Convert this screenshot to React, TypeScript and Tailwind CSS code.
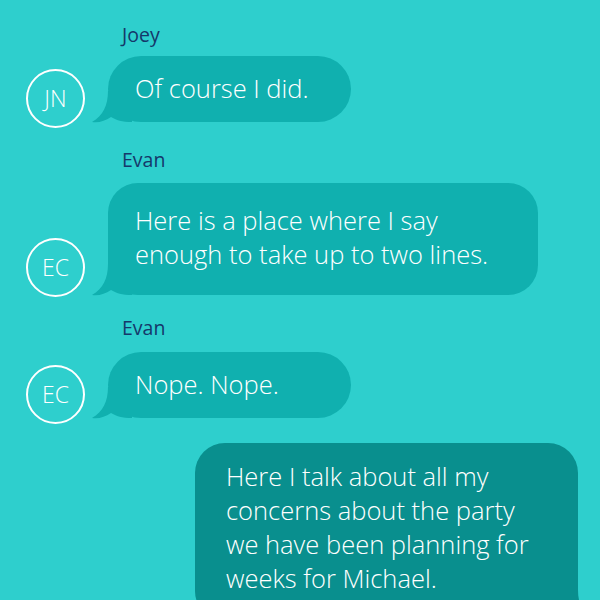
import React from "react";

const LeftTail = () => (
  <svg
    className="absolute left-[-16px] bottom-[-1px]"
    width="40"
    height="32"
    viewBox="0 0 40 32"
  >
    <path
      d="M16 0 C16 14 11 25 0 31 C7 32 13 30 19 26 C24 29 30 31 40 31 L40 0 Z"
      fill="#10b0af"
    />
  </svg>
);

const RightTail = () => (
  <svg
    className="absolute right-[-16px] bottom-[-1px]"
    width="40"
    height="32"
    viewBox="0 0 40 32"
  >
    <path
      d="M24 0 C24 14 29 25 40 31 C33 32 27 30 21 26 C16 29 10 31 0 31 L0 0 Z"
      fill="#098f8e"
    />
  </svg>
);

const Avatar = ({ initials }: { initials: string }) => (
  <div className="w-[59px] h-[59px] shrink-0 rounded-full border-2 border-white flex items-center justify-center text-white text-[23px] font-light leading-none">
    {initials}
  </div>
);

const Name = ({ children }: { children: React.ReactNode }) => (
  <div className="pl-[122px] text-[19.5px] leading-[24px] text-[#15386a]">
    {children}
  </div>
);

const bubbleText = "text-[25.5px] font-light leading-[34px] text-white";

export default function App() {
  return (
    <div
      className="w-[600px] h-[600px] overflow-hidden bg-[#2ecfcd] pt-[23px]"
      style={{ fontFamily: "'Open Sans', Lato, sans-serif" }}
    >
      <Name>Joey</Name>
      <div className="mt-[9px] flex items-end pl-[26px] gap-[23px]">
        <Avatar initials="JN" />
        <div className={`relative mb-[6px] w-[243px] rounded-[33px] bg-[#10b0af] px-[27px] pt-[15px] pb-[17px] ${bubbleText}`}>
          <LeftTail />
          <span className="relative">Of course I did.</span>
        </div>
      </div>

      <div className="mt-[20px]">
        <Name>Evan</Name>
      </div>
      <div className="mt-[11px] flex items-end pl-[26px] gap-[23px]">
        <Avatar initials="EC" />
        <div className={`relative mb-[2px] w-[430px] rounded-[30px] bg-[#10b0af] px-[27px] pt-[20px] pb-[24px] ${bubbleText}`}>
          <LeftTail />
          <span className="relative">
            Here is a place where I say
            <br />
            enough to take up to two lines.
          </span>
        </div>
      </div>

      <div className="mt-[19px]">
        <Name>Evan</Name>
      </div>
      <div className="mt-[12px] flex items-end pl-[26px] gap-[23px]">
        <Avatar initials="EC" />
        <div className={`relative mb-[6px] w-[243px] rounded-[33px] bg-[#10b0af] px-[27px] pt-[15px] pb-[17px] ${bubbleText}`}>
          <LeftTail />
          <span className="relative">Nope. Nope.</span>
        </div>
      </div>

      <div className="mt-[19px] flex justify-end pr-[22px]">
        <div className={`relative w-[383px] rounded-[30px] bg-[#098f8e] pl-[31px] pr-[20px] pt-[16px] pb-[26px] ${bubbleText}`}>
          <RightTail />
          <span className="relative">
            Here I talk about all my
            <br />
            concerns about the party
            <br />
            we have been planning for
            <br />
            weeks for Michael.
          </span>
        </div>
      </div>
    </div>
  );
}
